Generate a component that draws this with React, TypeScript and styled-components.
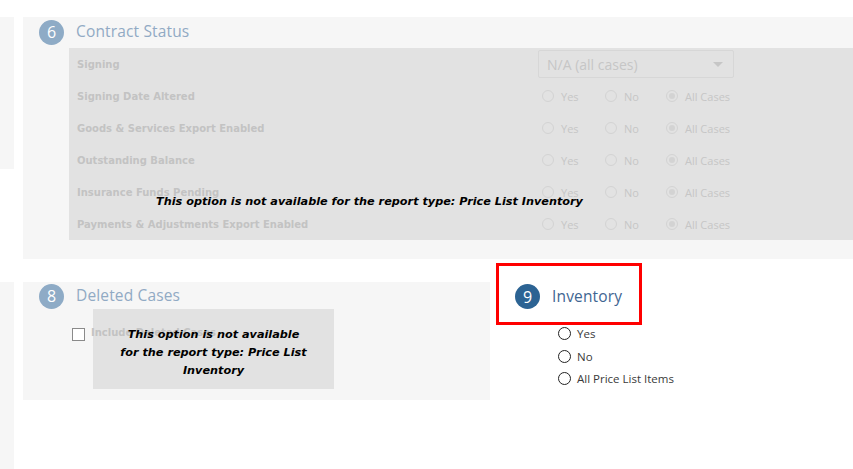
import React from "react";
import styled, { createGlobalStyle } from "styled-components";

const Global = createGlobalStyle`
  html, body { margin: 0; padding: 0; background: #fff; }
  body { font-family: "Open Sans", "Liberation Sans", sans-serif; }
  * { box-sizing: border-box; }
`;

const Page = styled.div`
  width: 853px;
  height: 469px;
  overflow: hidden;
  padding-top: 17px;
  display: flex;
  flex-direction: column;
`;

const Row = styled.div<{ $grow?: boolean; $mt?: number }>`
  display: flex;
  align-items: flex-start;
  flex: ${(p) => (p.$grow ? 1 : "none")};
  margin-top: ${(p) => p.$mt ?? 0}px;
`;

const Strip = styled.div<{ $h?: number; $mt?: number }>`
  width: 14px;
  flex: none;
  background: #f6f6f6;
  margin-right: 9px;
  margin-top: ${(p) => p.$mt ?? 0}px;
  height: ${(p) => (p.$h ? `${p.$h}px` : "auto")};
  align-self: ${(p) => (p.$h ? "flex-start" : "stretch")};
`;

const Card = styled.div<{ $w?: number; $h: number; $mt?: number }>`
  position: relative;
  background: #f6f6f6;
  flex: ${(p) => (p.$w ? "none" : 1)};
  width: ${(p) => (p.$w ? `${p.$w}px` : "auto")};
  height: ${(p) => p.$h}px;
  margin-top: ${(p) => p.$mt ?? 0}px;
`;

const Header = styled.div<{ $top: number; $left: number }>`
  display: flex;
  align-items: center;
  height: 26px;
  padding-left: ${(p) => p.$left}px;
  margin-top: ${(p) => p.$top}px;
`;

const Num = styled.div<{ $dark?: boolean }>`
  width: 25px;
  height: 25px;
  border-radius: 50%;
  background: ${(p) => (p.$dark ? "#2c6393" : "#8eabc6")};
  color: #fff;
  font-size: 16px;
  display: flex;
  align-items: center;
  justify-content: center;
  margin-right: 12px;
  flex: none;
`;

const Title = styled.div<{ $dark?: boolean }>`
  font-size: 15.5px;
  color: ${(p) => (p.$dark ? "#3f6692" : "#91aac4")};
  letter-spacing: 0.15px;
  margin-top: -2px;
`;

const Disabled = styled.div`
  position: relative;
  margin: 3px 0 0 46px;
  height: 192px;
  background: #e2e2e2;
`;

const OptRow = styled.div`
  display: flex;
  align-items: center;
  height: 32px;
`;

const Label = styled.div`
  width: 469px;
  padding-left: 8px;
  font-family: "DejaVu Sans", Verdana, sans-serif;
  font-weight: bold;
  font-size: 10px;
  color: #c3c3c3;
`;

const Select = styled.div`
  width: 196px;
  height: 28px;
  border: 1px solid #d7d7d7;
  border-radius: 2px;
  display: flex;
  align-items: center;
  justify-content: space-between;
  padding: 0 10px 0 8px;
  font-size: 14px;
  color: #c6c6c6;
`;

const Caret = styled.span`
  width: 0;
  height: 0;
  border-left: 5px solid transparent;
  border-right: 5px solid transparent;
  border-top: 5px solid #c6c6c6;
`;

const Radios = styled.div`
  display: flex;
  align-items: center;
  padding-left: 4px;
`;

const Opt = styled.div<{ $w?: number }>`
  display: flex;
  align-items: center;
  width: ${(p) => (p.$w ? `${p.$w}px` : "auto")};
  font-size: 11px;
  color: #c6c6c6;
`;

const Dot = styled.span<{ $on?: boolean }>`
  width: 12px;
  height: 12px;
  border-radius: 50%;
  border: 1px solid #d3d3d3;
  margin-right: 7px;
  display: inline-flex;
  align-items: center;
  justify-content: center;
  &::after {
    content: "";
    width: 6px;
    height: 6px;
    border-radius: 50%;
    background: ${(p) => (p.$on ? "#d3d3d3" : "transparent")};
  }
`;

const Notice = styled.div`
  font-family: "DejaVu Sans", Verdana, sans-serif;
  font-weight: bold;
  font-style: italic;
  font-size: 11.25px;
  color: #000;
`;

const TopNotice = styled(Notice)`
  position: absolute;
  left: 87px;
  top: 147px;
  white-space: nowrap;
`;

const CheckRow = styled.div`
  position: relative;
  z-index: 1;
  display: flex;
  align-items: center;
  margin: 19px 0 0 49px;
`;

const Box = styled.span`
  width: 13px;
  height: 13px;
  border: 1px solid #8a8a8a;
  background: #fff;
  margin-right: 6px;
`;

const CheckLabel = styled.span`
  font-family: "DejaVu Sans", Verdana, sans-serif;
  font-weight: bold;
  font-size: 10px;
  color: #c3c3c3;
  margin-top: -4px;
`;

const Overlay = styled.div`
  position: absolute;
  left: 70px;
  top: 27px;
  width: 241px;
  height: 80px;
  background: #e2e2e2;
  display: flex;
  align-items: center;
  justify-content: center;
  padding: 8px 25px 0;
`;

const OverlayText = styled(Notice)`
  position: relative;
  z-index: 2;
  text-align: center;
  line-height: 18px;
`;

const Inventory = styled.div`
  margin-left: 6px;
  display: flex;
  flex-direction: column;
`;

const Highlight = styled.div`
  width: 146px;
  height: 62px;
  border: 3px solid #ff0000;
  padding: 18px 0 0 16px;
`;

const InvHeader = styled.div`
  display: flex;
  align-items: center;
`;

const InvList = styled.div`
  display: flex;
  flex-direction: column;
  gap: 9.5px;
  padding: 2px 0 0 62px;
`;

const InvOpt = styled.div`
  display: flex;
  align-items: center;
  font-size: 11.5px;
  color: #3a3a3a;
  height: 13px;
`;

const InvDot = styled.span`
  width: 13px;
  height: 13px;
  border-radius: 50%;
  border: 1.5px solid #222;
  margin-right: 6px;
`;

const rows = [
  "Signing Date Altered",
  "Goods & Services Export Enabled",
  "Outstanding Balance",
  "Insurance Funds Pending",
  "Payments & Adjustments Export Enabled",
];

export default function App() {
  return (
    <Page>
      <Global />
      <Row>
        <Strip $h={152} />
        <Card $h={242}>
          <Header $top={2} $left={16}>
            <Num>6</Num>
            <Title>Contract Status</Title>
          </Header>
          <Disabled>
            <OptRow>
              <Label>Signing</Label>
              <Select>
                <span>N/A (all cases)</span>
                <Caret />
              </Select>
            </OptRow>
            {rows.map((r) => (
              <OptRow key={r}>
                <Label>{r}</Label>
                <Radios>
                  <Opt $w={63}>
                    <Dot />
                    Yes
                  </Opt>
                  <Opt $w={61}>
                    <Dot />
                    No
                  </Opt>
                  <Opt>
                    <Dot $on />
                    All Cases
                  </Opt>
                </Radios>
              </OptRow>
            ))}
            <TopNotice>This option is not available for the report type: Price List Inventory</TopNotice>
          </Disabled>
        </Card>
      </Row>
      <Row $grow $mt={4}>
        <Strip $mt={19} />
        <Card $w={467} $h={118} $mt={19}>
          <Header $top={1} $left={16}>
            <Num>8</Num>
            <Title>Deleted Cases</Title>
          </Header>
          <CheckRow>
            <Box />
            <CheckLabel>Include Deleted Cases</CheckLabel>
          </CheckRow>
          <Overlay>
            <OverlayText>This option is not available for the report type: Price List Inventory</OverlayText>
          </Overlay>
        </Card>
        <Inventory>
          <Highlight>
            <InvHeader>
              <Num $dark>9</Num>
              <Title $dark>Inventory</Title>
            </InvHeader>
          </Highlight>
          <InvList>
            <InvOpt>
              <InvDot />
              Yes
            </InvOpt>
            <InvOpt>
              <InvDot />
              No
            </InvOpt>
            <InvOpt>
              <InvDot />
              All Price List Items
            </InvOpt>
          </InvList>
        </Inventory>
      </Row>
    </Page>
  );
}
